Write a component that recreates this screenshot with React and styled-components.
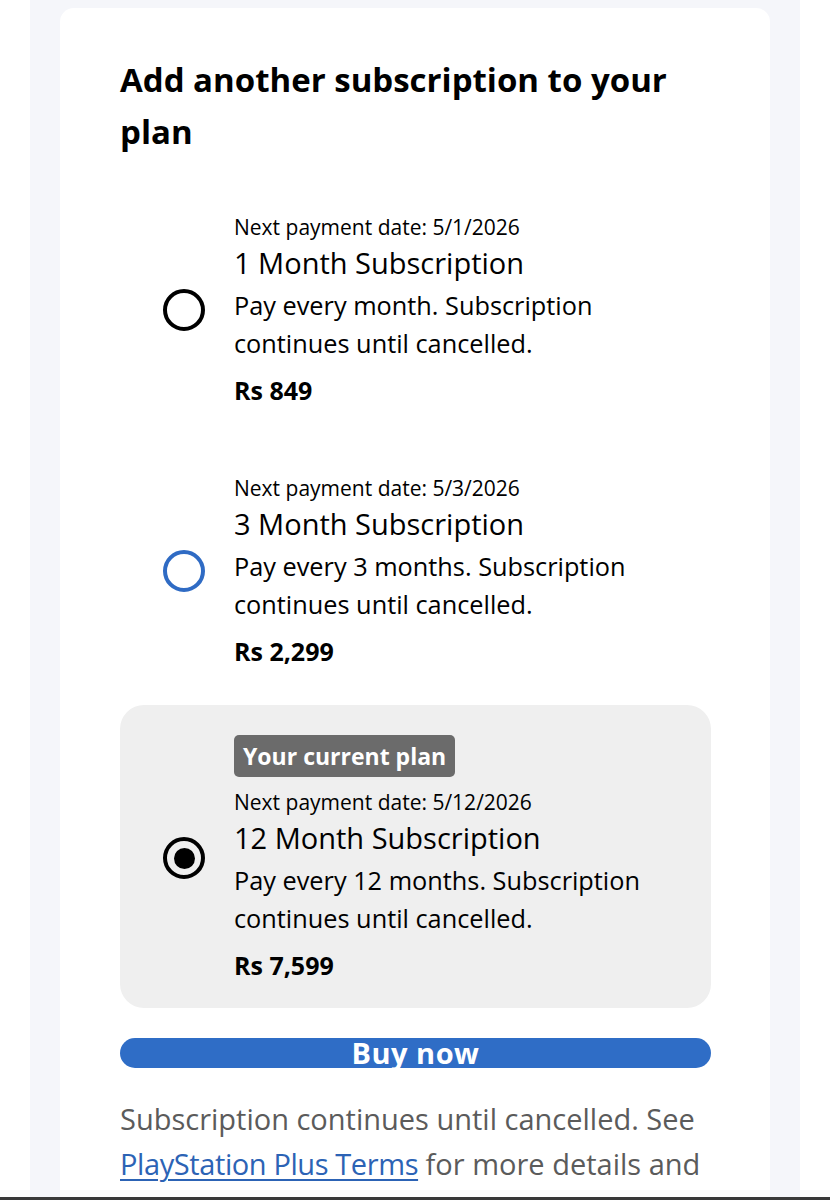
import React, { useState } from 'react';
import styled, { createGlobalStyle, css } from 'styled-components';

const GlobalStyle = createGlobalStyle`
  html, body {
    margin: 0;
    padding: 0;
    background: #ffffff;
  }
  body {
    font-family: 'Open Sans', 'Noto Sans', sans-serif;
    font-variant-ligatures: none;
    color: #000;
  }
`;

const Page = styled.div`
  margin: 0 30px;
  padding: 8px 30px 0;
  background: #f5f6fa;
  min-height: 1200px;
  box-sizing: border-box;
`;

const Card = styled.div`
  background: #ffffff;
  border-radius: 14px;
  padding: 46px 59px 40px 60px;
`;

const Heading = styled.h2`
  margin: 0;
  font-size: 33px;
  line-height: 52px;
  font-weight: 700;
`;

const OptionList = styled.div`
  margin-top: 25px;
  display: flex;
  flex-direction: column;
  gap: 11px;
`;

const Option = styled.label`
  display: flex;
  align-items: center;
  gap: 29px;
  padding: 30px 30px 27px 43px;
  border-radius: 24px;
  cursor: pointer;

  ${props => props.selected && css`
    background: #efefef;
  `}
`;

const Radio = styled.span`
  flex: none;
  position: relative;
  width: 42px;
  height: 42px;
  box-sizing: border-box;
  border-radius: 50%;
  border: 4px solid ${props => (props.focused ? '#2f6bc4' : '#000')};

  ${props => props.checked && css`
    &::after {
      content: '';
      position: absolute;
      top: 6.5px;
      left: 6.5px;
      width: 21px;
      height: 21px;
      border-radius: 50%;
      background: #000;
    }
  `}
`;

const Details = styled.div`
  display: flex;
  flex-direction: column;
  align-items: flex-start;
`;

const Badge = styled.span`
  background: #6b6b6b;
  color: #fff;
  font-size: 23px;
  font-weight: 700;
  line-height: 42px;
  padding: 0 9px;
  border-radius: 5px;
  margin-bottom: 11px;
`;

const NextDate = styled.div`
  font-size: 21px;
  line-height: 28px;
`;

const Title = styled.div`
  font-size: 29px;
  line-height: 40px;
  margin-top: 2px;
`;

const Description = styled.div`
  font-size: 25.3px;
  line-height: 38px;
  margin-top: 3px;
`;

const Price = styled.div`
  font-size: 25px;
  font-weight: 700;
  line-height: 32px;
  margin-top: 12px;
`;

const BuyButton = styled.button`
  display: block;
  width: 100%;
  margin-top: 30px;
  height: 30px;
  border: none;
  border-radius: 15px;
  background: #2f6dc6;
  color: #fff;
  font-family: inherit;
  font-size: 29px;
  font-weight: 700;
  line-height: 30px;
  letter-spacing: 0.5px;
  padding: 0;
  cursor: pointer;
`;

const Footnote = styled.p`
  margin: 28px 0 0;
  font-size: 29px;
  line-height: 45px;
  color: #5b5b5b;
`;

const TermsLink = styled.a`
  color: #2c63b5;
  letter-spacing: -0.4px;
  text-decoration: underline;
  text-underline-offset: 4px;
  text-decoration-thickness: 2px;
`;

const BottomEdge = styled.div`
  position: fixed;
  left: 0;
  right: 0;
  bottom: 0;
  height: 3px;
  background: #3a3a3a;
`;

const plans = [
  {
    id: '1m',
    date: '5/1/2026',
    title: '1 Month Subscription',
    text: 'Pay every month. Subscription continues until cancelled.',
    price: 'Rs 849',
  },
  {
    id: '3m',
    date: '5/3/2026',
    title: '3 Month Subscription',
    text: 'Pay every 3 months. Subscription continues until cancelled.',
    price: 'Rs 2,299',
    focused: true,
  },
  {
    id: '12m',
    date: '5/12/2026',
    title: '12 Month Subscription',
    text: 'Pay every 12 months. Subscription continues until cancelled.',
    price: 'Rs 7,599',
    current: true,
  },
];

export default function App() {
  const [selected, setSelected] = useState('12m');

  return (
    <>
      <GlobalStyle />
      <Page>
        <Card>
          <Heading>Add another subscription to your plan</Heading>
          <OptionList>
            {plans.map(plan => (
              <Option
                key={plan.id}
                selected={selected === plan.id}
                onClick={() => setSelected(plan.id)}
              >
                <Radio checked={selected === plan.id} focused={plan.focused} />
                <Details>
                  {plan.current && <Badge>Your current plan</Badge>}
                  <NextDate>Next payment date: {plan.date}</NextDate>
                  <Title>{plan.title}</Title>
                  <Description>{plan.text}</Description>
                  <Price>{plan.price}</Price>
                </Details>
              </Option>
            ))}
          </OptionList>
          <BuyButton>Buy now</BuyButton>
          <Footnote>
            Subscription continues until cancelled. See{' '}
            <TermsLink href="#">PlayStation Plus Terms</TermsLink> for more
            details and how to cancel.
          </Footnote>
        </Card>
      </Page>
      <BottomEdge />
    </>
  );
}
